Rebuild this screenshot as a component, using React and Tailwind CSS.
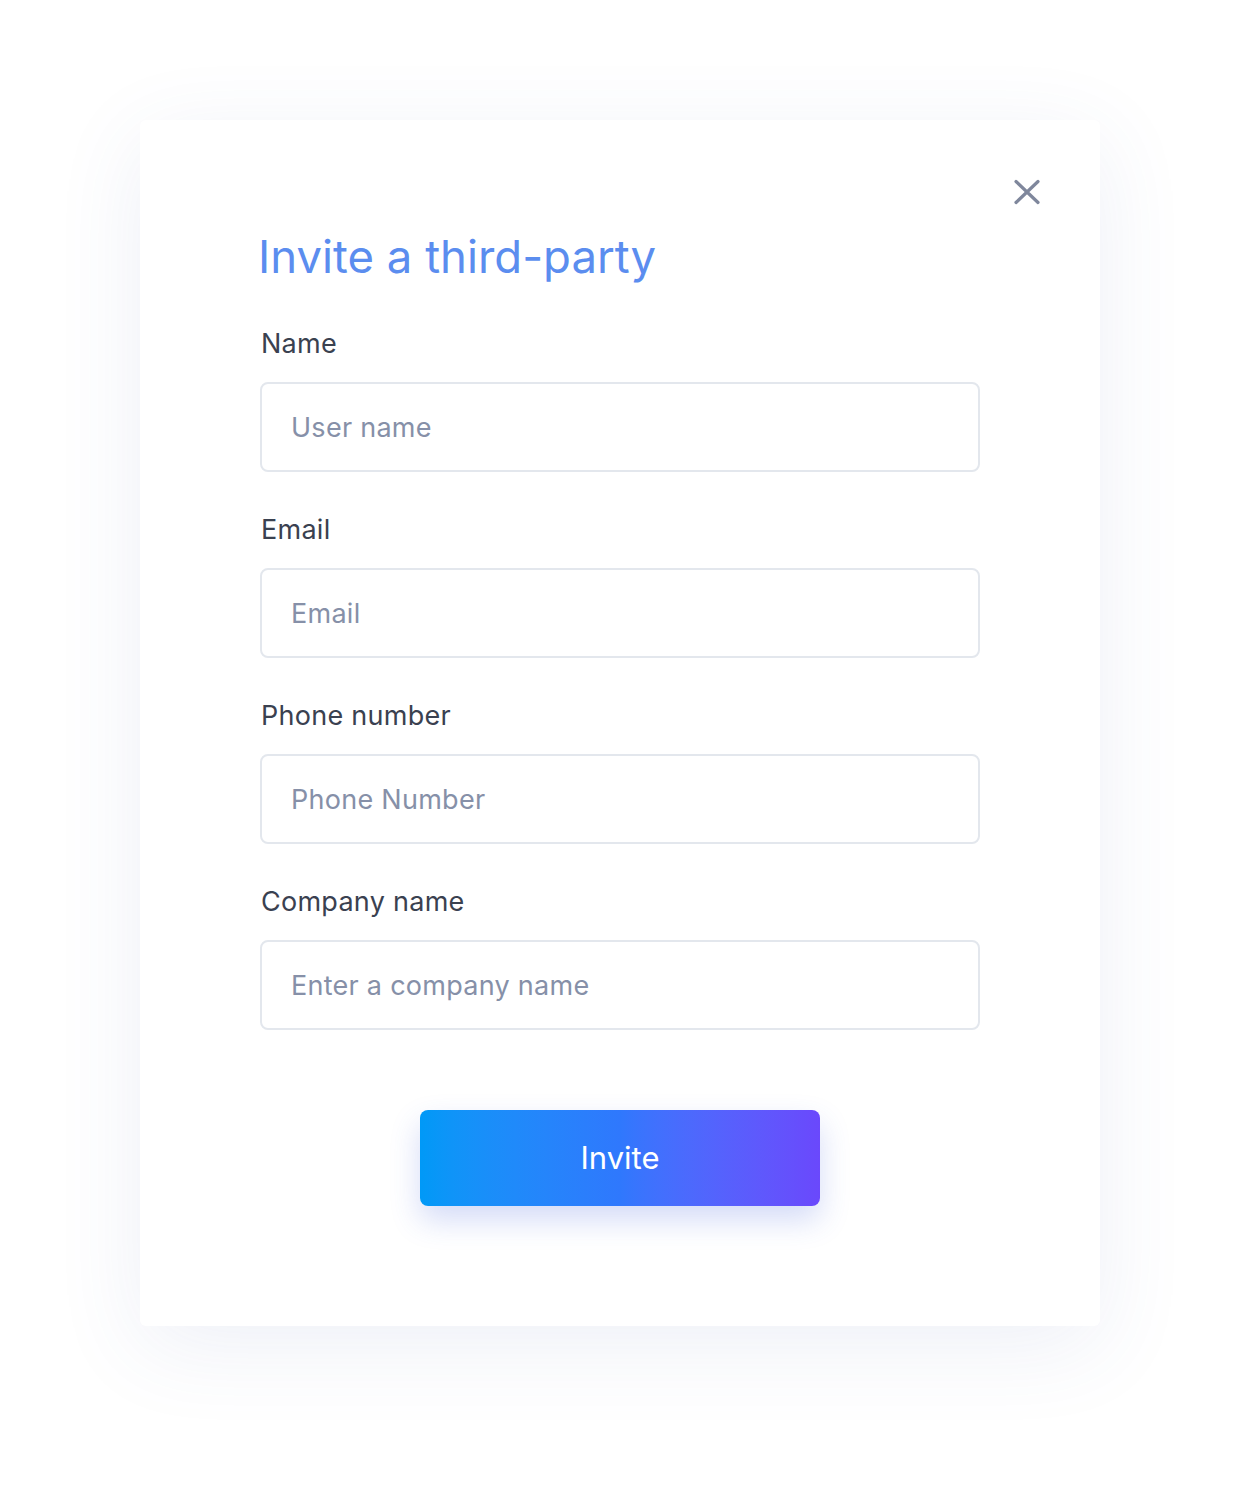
const fields = [
  { label: "Name", placeholder: "User name" },
  { label: "Email", placeholder: "Email" },
  { label: "Phone number", placeholder: "Phone Number" },
  { label: "Company name", placeholder: "Enter a company name" },
];

const App = () => {
  return (
    <div className="min-h-[1486px] bg-white pt-[120px] pb-[160px] font-['Inter',sans-serif]">
      <div className="relative mx-auto w-[960px] rounded-md bg-white px-[120px] pt-[109px] pb-[120px] shadow-[0_20px_90px_rgba(70,90,170,0.09)]">
        {/* close */}
        <button className="absolute right-[59px] top-[58px] flex h-[28px] w-[28px] items-center justify-center text-[#7f879c]">
          <svg width="26" height="26" viewBox="0 0 26 26" fill="none" stroke="currentColor" strokeWidth="3.2" strokeLinecap="round">
            <path d="M2 2.5L24 23.5M24 2.5L2 23.5" />
          </svg>
        </button>

        <h1 className="text-[45.5px] leading-[56px] text-[#5b8def] -ml-[2px]">Invite a third-party</h1>

        <div className="mt-[43px] flex flex-col gap-[42px]">
          {fields.map((f, idx) => (
            <div key={idx} className="flex flex-col">
              <label className="text-[27px] leading-[32px] tracking-[0.01em] text-[#3a4150] ml-px">{f.label}</label>
              <input
                type="text"
                placeholder={f.placeholder}
                className="mt-[22px] h-[90px] w-[720px] rounded-[8px] border-2 border-[#e3e7ed] bg-white px-[29px] text-[27px] tracking-[0.01em] text-[#3a4150] outline-none placeholder:text-[#8690a8]"
              />
            </div>
          ))}
        </div>

        <div className="mt-[80px] flex justify-center">
          <button className="h-[96px] w-[400px] rounded-[8px] bg-gradient-to-r from-[#0099f7] via-[#2f78fd] to-[#6a48fc] text-[31px] text-white shadow-[0_14px_30px_rgba(60,90,220,0.22)]">
            Invite
          </button>
        </div>
      </div>
    </div>
  );
};

export default App;
